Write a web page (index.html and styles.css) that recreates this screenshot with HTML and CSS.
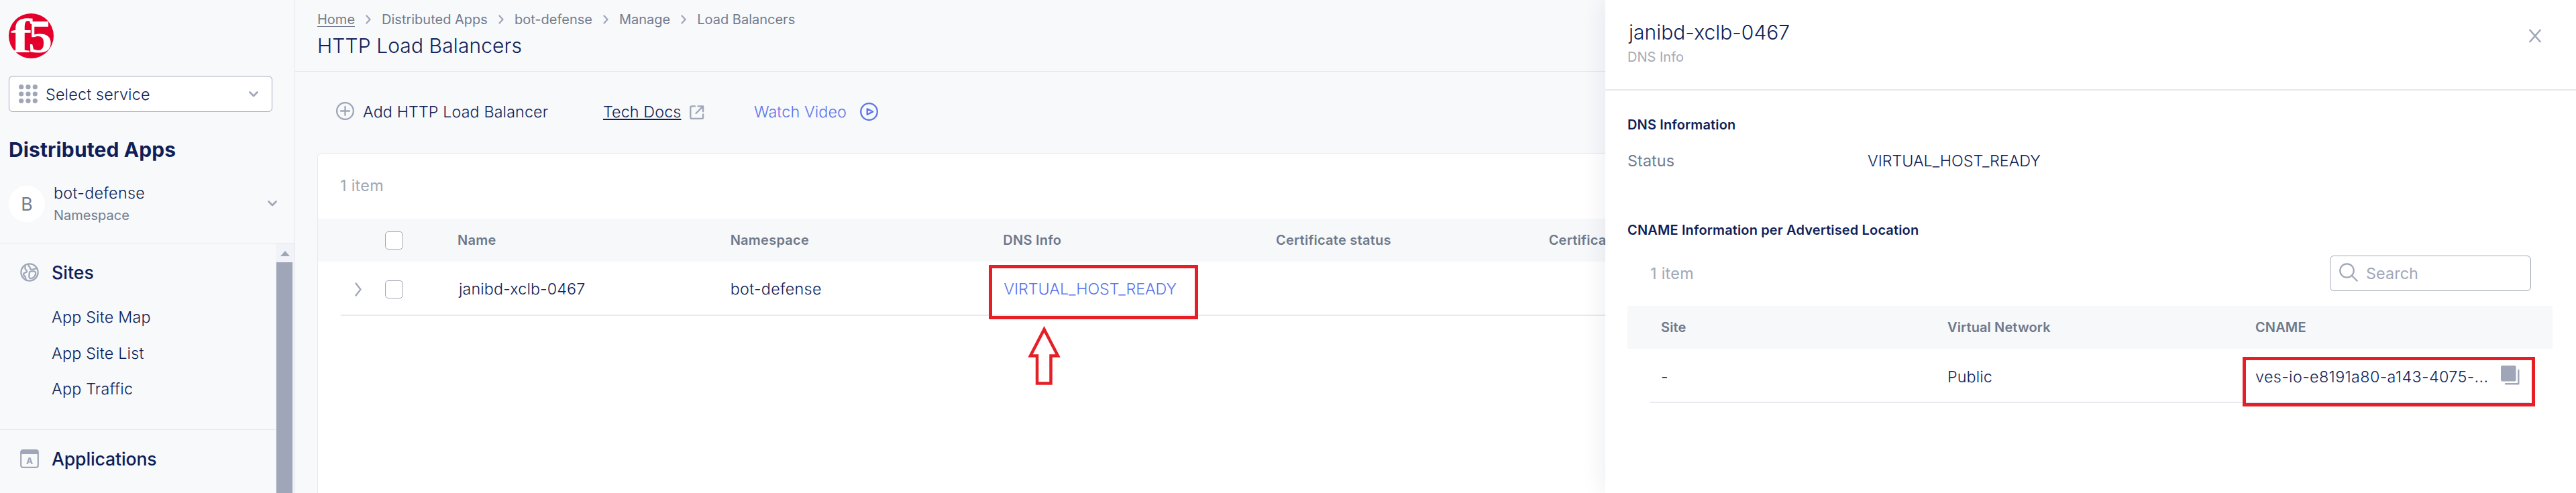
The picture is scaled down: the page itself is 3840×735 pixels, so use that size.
FILE: index.html
```html
<!DOCTYPE html>
<html lang="en">
<head>
<meta charset="utf-8">
<title>HTTP Load Balancers</title>
<link rel="stylesheet" href="styles.css">
</head>
<body>
<div class="app">
  <aside class="sidebar">
    <div class="sidebar-top">
      <svg class="logo" width="67" height="67" viewBox="0 0 67 67">
        <circle cx="33.5" cy="33.5" r="33.5" fill="#e4002b"/>
        <g class="logo-text">
          <text transform="translate(3 57.5) scale(1.32 1)" font-size="72">f</text>
          <text transform="translate(29 57.5) scale(1.05 1)" font-size="69">5</text>
        </g>
      </svg>
      <div class="service-select">
        <svg width="28" height="28" viewBox="0 0 28 28" fill="#9fa6b7">
          <circle cx="3.7" cy="3.7" r="3.6"/><circle cx="14" cy="3.7" r="3.6"/><circle cx="24.3" cy="3.7" r="3.6"/>
          <circle cx="3.7" cy="14" r="3.6"/><circle cx="14" cy="14" r="3.6"/><circle cx="24.3" cy="14" r="3.6"/>
          <circle cx="3.7" cy="24.3" r="3.6"/><circle cx="14" cy="24.3" r="3.6"/><circle cx="24.3" cy="24.3" r="3.6"/>
        </svg>
        <span class="service-label">Select service</span>
        <svg class="chev" width="14" height="9" viewBox="0 0 14 9"><path d="M1.5 1.5 7 7l5.500-5.500"/></svg>
      </div>
      <h2 class="side-heading">Distributed Apps</h2>
      <div class="namespace">
        <span class="avatar">B</span>
        <div class="ns-text">
          <div class="ns-name">bot-defense</div>
          <div class="ns-kind">Namespace</div>
        </div>
        <svg class="chev" width="14" height="9" viewBox="0 0 14 9"><path d="M1.5 1.5 7 7l5.500-5.500"/></svg>
      </div>
    </div>
    <div class="nav-area">
      <nav class="nav">
        <section class="nav-section">
          <div class="nav-title">
            <svg class="line-icon" width="28" height="28" viewBox="0 0 28 28"><circle cx="14" cy="14" r="12.6"/><path d="M7.500 4v4.500c0 2 3.500 2 2.500 4.500-1 2.200-5 1-5 4 0 2.200 2.500 2.500 3 4.500l.500 4M12 2.500c1 3.500 3 3 3.500 7 2 1.500 6-.500 9.500-1.500M14 13.500c3-1.500 8-1.500 9 .500 1 3-1.500 7-4.500 8.500-2 1-4.500 1-5-1-.500-2.500.300-5.500.500-8z"/></svg>
            <span class="nav-sites">Sites</span>
          </div>
          <ul class="nav-list">
            <li>App Site Map</li>
            <li>App Site List</li>
            <li>App Traffic</li>
          </ul>
        </section>
        <section class="nav-section">
          <div class="nav-title">
            <svg width="28" height="28" viewBox="0 0 28 28"><rect x="1.200" y="1.200" width="25.600" height="25.600" rx="3" fill="none" stroke="#9fa6b7" stroke-width="2.200"/><path d="M1 7V4q0-3 3-3h20q3 0 3 3v3z" fill="#9fa6b7"/><text class="app-letter" x="14" y="21.500">A</text></svg>
            <span class="nav-apps">Applications</span>
          </div>
        </section>
      </nav>
      <div class="scrollbar">
        <svg width="14" height="8" viewBox="0 0 14 8"><path d="M0 8 7 0l7 8z" fill="#9fa6b7"/></svg>
        <div class="thumb"></div>
      </div>
    </div>
  </aside>

  <main class="main">
    <header class="page-head">
      <div class="crumbs">
        <a class="home">Home</a>
        <svg width="8" height="14" viewBox="0 0 8 14"><path d="M1.500 1.500 6.500 7l-5 5.500"/></svg>
        <span>Distributed Apps</span>
        <svg width="8" height="14" viewBox="0 0 8 14"><path d="M1.500 1.500 6.500 7l-5 5.500"/></svg>
        <span>bot-defense</span>
        <svg width="8" height="14" viewBox="0 0 8 14"><path d="M1.500 1.500 6.500 7l-5 5.500"/></svg>
        <span>Manage</span>
        <svg width="8" height="14" viewBox="0 0 8 14"><path d="M1.500 1.500 6.500 7l-5 5.500"/></svg>
        <span>Load Balancers</span>
      </div>
      <h1 class="title">HTTP Load Balancers</h1>
    </header>
    <div class="toolbar">
      <div class="tool add">
        <svg class="line-icon" width="27" height="27" viewBox="0 0 27 27"><circle cx="13.500" cy="13.500" r="12.400"/><path d="M13.500 7v13M7 13.500h13"/></svg>
        <span>Add HTTP Load Balancer</span>
      </div>
      <div class="tool docs">
        <span class="docs-label">Tech Docs</span>
        <svg class="line-icon ext" width="22" height="22" viewBox="0 0 22 22"><path d="M8 1.300H3.200q-1.900 0-1.900 1.900v14.700q0 1.900 1.900 1.900h15q1.900 0 1.900-1.900v-4.500M12.500 1.300h7.600v8M19.800 1.600 9.500 12"/></svg>
      </div>
      <div class="tool video">
        <span>Watch Video</span>
        <svg width="27" height="27" viewBox="0 0 27 27" fill="none" stroke="#5b73ea" stroke-width="2.300" stroke-linejoin="round"><circle cx="13.500" cy="13.500" r="12.300"/><path d="M10.700 9.200v8.600l8.500-4.300z"/></svg>
      </div>
    </div>
    <div class="card">
      <div class="count">1 item</div>
      <div class="thead">
        <span></span><span class="check"></span>
        <span>Name</span><span>Namespace</span><span>DNS Info</span><span>Certificate status</span><span>Certifica</span>
      </div>
      <div class="trow">
        <svg class="expand" width="10" height="21" viewBox="0 0 10 21"><path d="M1.500 1.500 8.500 10.500l-7 9"/></svg>
        <span class="check"></span>
        <span class="lb-name">janibd-xclb-0467</span><span class="ls">bot-defense</span><span class="link">VIRTUAL_HOST_READY</span>
      </div>
    </div>
  </main>

  <section class="panel">
    <header class="panel-head">
      <div>
        <div class="panel-title">janibd-xclb-0467</div>
        <div class="panel-sub">DNS Info</div>
      </div>
      <svg class="close" width="18" height="22" viewBox="0 0 18 22"><path d="M1.500 3 16.500 20M16.500 3 1.500 20"/></svg>
    </header>
    <div class="panel-body">
      <h3>DNS Information</h3>
      <div class="status"><span class="status-key">Status</span><span class="status-val">VIRTUAL_HOST_READY</span></div>
      <h3 class="cname-head">CNAME Information per Advertised Location</h3>
      <div class="list-bar">
        <span class="panel-count">1 item</span>
        <div class="search">
          <svg class="line-icon" width="28" height="28" viewBox="0 0 28 28"><circle cx="11.500" cy="11.500" r="10.200"/><path d="m18.700 18.700 8 8"/></svg>
          <span>Search</span>
        </div>
      </div>
      <div class="pt-head"><span>Site</span><span>Virtual Network</span><span>CNAME</span></div>
      <div class="pt-row">
        <span>-</span><span>Public</span>
        <span class="cname"><span class="cname-text">ves-io-e8191a80-a143-4075-...</span>
          <svg width="28" height="29" viewBox="0 0 28 29"><rect width="22.500" height="23.500" rx="2" fill="#9fa6b7"/><path d="M26.300 7v20.200H7" fill="none" stroke="#9fa6b7" stroke-width="2.400" stroke-linecap="round" stroke-linejoin="round"/></svg>
        </span>
      </div>
    </div>
  </section>

  <div class="mark mark-status"></div>
  <div class="mark mark-cname"></div>
  <svg class="arrow" width="50" height="92" viewBox="0 0 50 92"><path d="M24.500 6 4 45.500h10V86.500h20.500V45.500H45z"/></svg>
</div>
</body>
</html>
```

FILE: styles.css
```css
* { box-sizing: border-box; }
body { margin: 0; }
h1, h2, h3, ul { margin: 0; padding: 0; }
svg { display: block; flex: none; }

.app {
  position: relative;
  display: flex;
  width: 3840px;
  height: 735px;
  overflow: hidden;
  background: #f7f9fb;
  color: #0f1e57;
  font: 300 23.33px/30px Inter, sans-serif;
  letter-spacing: 0.1px;
  white-space: nowrap;
}

.line-icon { fill: none; stroke: #9fa6b7; stroke-width: 2.3; stroke-linecap: round; stroke-linejoin: round; }
.chev { fill: none; stroke: #9fa6b7; stroke-width: 2.6; stroke-linecap: round; stroke-linejoin: round; }

/* Sidebar */
.sidebar { display: flex; flex-direction: column; width: 440px; flex: none; border-right: 1px solid #e5e8ee; }
.sidebar-top { height: 363px; flex: none; padding: 20px 0 0 13px; border-bottom: 1px solid #e5e8ee; }
.logo { overflow: visible; }
.logo-text { font-family: "Liberation Serif", serif; font-weight: 700; fill: #fff; letter-spacing: 0; }
.service-select {
  display: flex; align-items: center;
  width: 393px; height: 54px; margin-top: 26px; padding: 0 20px 0 14px;
  border: 1px solid #9fa6b7; border-radius: 6px; background: #fff;
}
.service-label { flex: 1; padding: 1px 0 0 12px; letter-spacing: 0.18px; }
.side-heading { margin-top: 38px; font-size: 30px; line-height: 36px; font-weight: 700; letter-spacing: 0.12px; }
.namespace { display: flex; align-items: flex-start; margin-top: 31px; padding-right: 26px; }
.avatar {
  width: 54px; height: 54px; margin-top: 5px; border-radius: 50%; background: #fff;
  color: #737c8e; font-size: 26.67px; line-height: 54px; text-align: center; font-weight: 400;
}
.ns-text { flex: 1; padding: 1px 0 0 13px; }
.ns-name { letter-spacing: 0.3px; }
.ns-kind { margin-top: 5px; color: #737c8e; font-size: 20px; line-height: 26px; font-weight: 400; letter-spacing: 0; }
.namespace .chev { margin-top: 27px; }
.nav-area { display: flex; flex: 1; min-height: 0; }
.nav { width: 411px; }
.nav-section { height: 278px; padding: 27px 0 0 30px; border-bottom: 1px solid #e5e8ee; }
.nav-title { display: flex; align-items: center; gap: 19px; font-size: 26.67px; line-height: 32px; font-weight: 500; }
.nav-sites { letter-spacing: 0; }
.nav-apps { letter-spacing: -0.15px; }
.app-letter { font: 700 13.5px Inter, sans-serif; text-anchor: middle; fill: #9fa6b7; }
.nav-list { margin: 24px 0 0 47px; list-style: none; line-height: 53.5px; letter-spacing: 0.2px; }
.scrollbar { display: flex; flex-direction: column; align-items: center; flex: 1; padding-top: 11px; background: #f1f3f8; }
.thumb { flex: 1; width: 24px; margin: 9px 3px 0 0; background: #9fa6b7; }

/* Main area */
.main { display: flex; flex-direction: column; flex: 1; min-width: 0; }
.page-head { height: 107px; padding: 15px 0 0 33px; border-bottom: 1px solid #e5e8ee; }
.crumbs { display: flex; align-items: center; gap: 16px; color: #737c8e; font-size: 20px; line-height: 28px; font-weight: 400; letter-spacing: 0; }
.crumbs svg { fill: none; stroke: #9fa6b7; stroke-width: 2.2; stroke-linecap: round; }
.home { text-decoration: underline; text-decoration-thickness: 1px; text-underline-offset: 3px; }
.title { margin-top: 5px; font-size: 30px; line-height: 40px; font-weight: 350; letter-spacing: 0.1px; }
.toolbar { display: grid; grid-template-columns: 397px 225px auto; justify-content: start; height: 121px; padding: 45px 0 0 61px; }
.tool { display: flex; align-items: center; height: 30px; }
.add { gap: 13px; }
.add svg { margin-top: -3px; }
.docs { gap: 13px; padding-left: 1px; }
.docs-label { text-decoration: underline; text-decoration-thickness: 2px; text-underline-offset: 2px; letter-spacing: 0.1px; }
.ext { margin-top: 1px; }
.video { gap: 20px; padding-left: 1px; color: #5b73ea; }
.video svg { margin-top: -1px; }
.card { flex: 1; margin-left: 33px; border: 1px solid #e5e8ee; border-width: 1px 0 0 1px; border-radius: 6px 0 0 0; background: #fff; }
.count { height: 97px; padding: 33px 0 0 33px; color: #a0a7b6; font-weight: 400; letter-spacing: 0.3px; }
.thead, .trow { display: grid; grid-template-columns: 66px 108px repeat(5, 406.67px); align-items: center; }
.thead { height: 64px; padding-left: 34px; background: #f7f8fa; color: #6d788a; font-size: 20px; line-height: 28px; font-weight: 600; letter-spacing: 0.25px; }
.trow { height: 81px; margin-left: 34px; padding-top: 3px; border-bottom: 2px solid #e6e9f0; }
.check { width: 27px; height: 27px; border: 1px solid #9fa6b7; border-radius: 5px; background: #fff; }
.expand { margin-left: 21px; fill: none; stroke: #9fa6b7; stroke-width: 2.3; stroke-linecap: round; }
.lb-name { padding-left: 2px; }
.ls { letter-spacing: 0.3px; }
.link { padding-left: 1px; color: #5b73ea; letter-spacing: -0.05px; }

/* Details panel, drawn over the table */
.panel { position: absolute; top: 0; left: 2393px; width: 1447px; height: 735px; background: #fff; box-shadow: 0 0 36px rgba(15, 30, 87, 0.09); }
.panel-head { display: flex; justify-content: space-between; align-items: flex-start; height: 135px; padding: 28px 52px 0 33px; border-bottom: 2px solid #e6e9f0; }
.panel-title { padding-left: 2px; font-size: 30px; line-height: 40px; font-weight: 350; letter-spacing: 0; }
.panel-sub { margin-top: 3px; color: #a4aab8; font-size: 20px; line-height: 28px; font-weight: 400; letter-spacing: 0; }
.close { margin-top: 14px; fill: none; stroke: #9fa6b7; stroke-width: 2.6; stroke-linecap: round; }
.panel-body { padding: 37px 35px 0 33px; }
.panel h3 { font-size: 20px; line-height: 28px; font-weight: 600; letter-spacing: 0.14px; }
.status { display: flex; margin-top: 25px; }
.status-key { width: 358px; color: #737c8e; font-weight: 400; }
.status-val { letter-spacing: -0.05px; }
.cname-head { margin-top: 74px; }
.list-bar { display: flex; align-items: center; justify-content: space-between; margin-top: 24px; padding: 0 32px 0 34px; }
.panel-count { color: #a0a7b6; font-weight: 400; letter-spacing: 0.3px; }
.search { display: flex; align-items: center; gap: 12px; width: 300px; height: 53px; padding: 1px 0 0 13px; border: 1px solid #9fa6b7; border-radius: 6px; color: #a0a7b6; font-weight: 400; }
.search svg { margin-top: -4px; }
.pt-head, .pt-row { display: grid; grid-template-columns: 427px 459px auto; justify-content: start; align-items: center; }
.pt-head { height: 64px; margin-top: 22px; padding-left: 50px; background: #f6f8fa; color: #6d788a; font-size: 20px; font-weight: 600; letter-spacing: 0.12px; }
.pt-row { height: 81px; margin: 0 33px 0 34px; padding: 4px 0 0 16px; border-bottom: 2px solid #e6e8f2; }
.cname { display: flex; align-items: center; }
.cname-text { width: 366px; letter-spacing: 0.37px; }
.cname svg { margin-top: -5px; }

/* Callouts */
.mark { position: absolute; border: 5px solid #e61f26; }
.mark-status { left: 1474px; top: 395px; width: 312px; height: 81px; }
.mark-cname { left: 3343px; top: 532px; width: 436px; height: 74px; }
.arrow { position: absolute; left: 1532px; top: 485px; fill: #fff; stroke: #e61f26; stroke-width: 4.5; }
```
